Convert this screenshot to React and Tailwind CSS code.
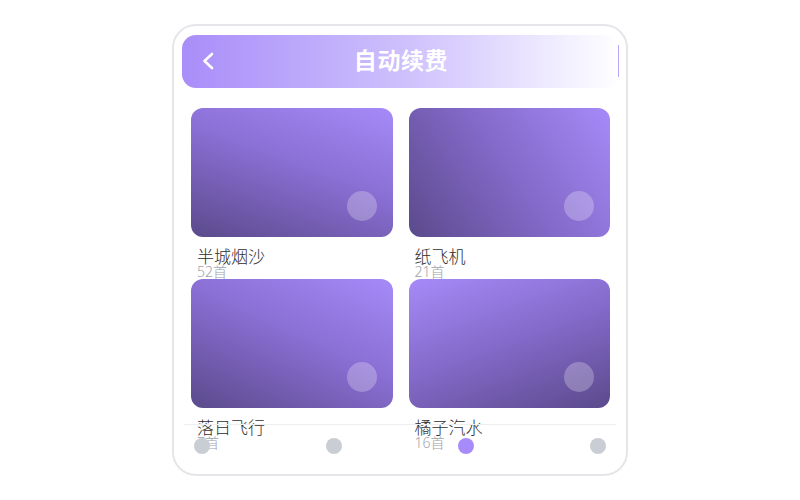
import React from 'react';

const albums = [
  { name: '半城烟沙', count: '52首', bg: 'bg-[linear-gradient(200deg,#a68af8_0%,#8a6fd4_45%,#5b4a8c_100%)]' },
  { name: '纸飞机', count: '21首', bg: 'bg-[linear-gradient(235deg,#a68af8_0%,#8369c8_50%,#5b4a8c_100%)]' },
  { name: '落日飞行', count: '7首', bg: 'bg-[linear-gradient(205deg,#a68af8_0%,#8a6fd4_45%,#5b4a8c_100%)]' },
  { name: '橘子汽水', count: '16首', bg: 'bg-[linear-gradient(160deg,#a68af8_0%,#8369c8_50%,#5b4a8c_100%)]' },
];

const AlbumCard = ({ album }) => (
  <div className="h-[171px]">
    <div className={`relative h-[129px] rounded-xl ${album.bg}`}>
      <div className="absolute right-4 bottom-4 w-[30px] h-[30px] rounded-full bg-white/25" />
    </div>
    <div className="pl-[6px] pt-[11px]">
      <p className="text-[17px] leading-[17px] font-light text-[#2e2e2e]">{album.name}</p>
      <p className="text-[14px] leading-[14px] font-light text-[#a0a3aa]">{album.count}</p>
    </div>
  </div>
);

const App = () => {
  return (
    <div
      className="w-[800px] h-[500px] bg-white flex items-center justify-center"
      style={{ fontFamily: '"Noto Sans", "Noto Sans CJK SC", sans-serif' }}
    >
      <div className="relative w-[456px] h-[452px] rounded-[24px] border-2 border-[#e6e6ea] bg-white overflow-hidden">
        <div className="pt-[9px] pl-2 pr-[6px]">
          <div className="relative h-[53px] rounded-[14px] bg-gradient-to-r from-[#a98df9] via-[#cdbffc] to-white flex items-center justify-center">
            <svg
              className="absolute left-[18px] top-[16px]"
              width="16"
              height="20"
              viewBox="0 0 16 20"
              fill="none"
              stroke="white"
              strokeWidth="2.6"
              strokeLinecap="round"
              strokeLinejoin="round"
            >
              <path d="M12 3 L4.5 10 L12 17" />
            </svg>
            <h1 className="text-[23px] font-bold text-white tracking-wide -mt-[2px]">自动续费</h1>
            <div className="absolute right-[1px] top-[10px] w-[1px] h-[32px] bg-[#b9a6f7]" />
          </div>
        </div>

        <div className="ml-[17px] w-[419px] mt-5 grid grid-cols-2 gap-x-4">
          {albums.map((a) => (
            <AlbumCard key={a.name} album={a} />
          ))}
        </div>

        <div className="absolute left-[10px] right-[10px] top-[398px] border-t border-[#eeeef0] flex justify-between px-[10px] pt-[13px]">
          <span className="w-4 h-4 rounded-full bg-[#c9cdd4]" />
          <span className="w-4 h-4 rounded-full bg-[#c9cdd4]" />
          <span className="w-4 h-4 rounded-full bg-[#a78bfa]" />
          <span className="w-4 h-4 rounded-full bg-[#c9cdd4]" />
        </div>
      </div>
    </div>
  );
};

export default App;
